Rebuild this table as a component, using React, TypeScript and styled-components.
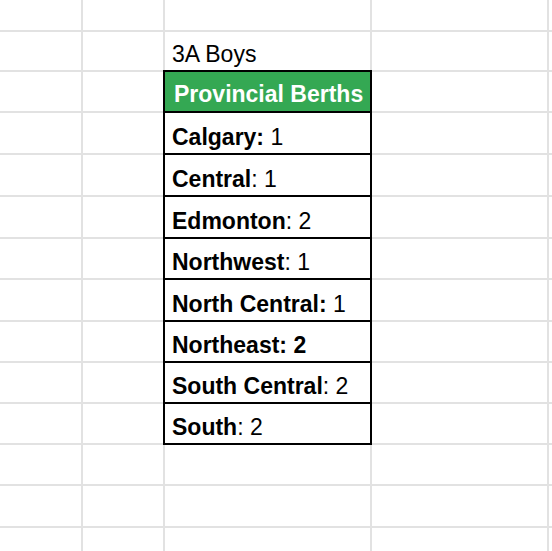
import React from "react";
import styled, { createGlobalStyle } from "styled-components";

const Global = createGlobalStyle`
  html, body { margin: 0; padding: 0; background: #fff; }
  body { font-family: "Liberation Sans", Arial, sans-serif; overflow: hidden; }
`;

const GRID = "#e2e2e2";
const INK = "#000";
const GREEN = "#34a853";

const rowHeights = [32, 40, 41, 42, 42, 42, 41, 42, 41, 41, 41, 41, 42, 40];

const Sheet = styled.div`
  display: grid;
  grid-template-columns: 83px 82px 207px 177px 1fr;
  grid-template-rows: ${rowHeights.map((h) => `${h}px`).join(" ")};
  width: 552px;
  height: 551px;
  overflow: hidden;
`;

const Cell = styled.div<{ $boxed?: boolean; $header?: boolean }>`
  box-sizing: border-box;
  border-right: 2px solid ${(p) => (p.$boxed ? INK : GRID)};
  border-bottom: 2px solid ${(p) => (p.$boxed ? INK : GRID)};
  box-shadow: ${(p) => (p.$boxed ? `-2px 0 0 ${INK}, -2px -2px 0 ${INK}, 0 -2px 0 ${INK}` : "none")};
  background: ${(p) => (p.$header ? GREEN : "transparent")};
  color: ${(p) => (p.$header ? "#fff" : INK)};
  font-weight: ${(p) => (p.$header ? 700 : 400)};
  font-size: 23px;
  line-height: 1;
  display: flex;
  align-items: flex-end;
  padding: 0 0 ${(p) => (p.$header ? 5 : 4)}px ${(p) => (p.$header ? 9 : 7)}px;
  white-space: pre;
  position: relative;
`;

const Bold = styled.b`
  font-weight: 700;
`;

const Plain = styled.span`
  font-weight: 400;
`;

type Entry = { bold: string; rest: string };

const entries: Entry[] = [
  { bold: "Calgary:", rest: " 1" },
  { bold: "Central", rest: ": 1" },
  { bold: "Edmonton", rest: ": 2" },
  { bold: "Northwest", rest: ": 1" },
  { bold: "North Central:", rest: " 1" },
  { bold: "Northeast: 2", rest: "" },
  { bold: "South Central", rest: ": 2" },
  { bold: "South", rest: ": 2" },
];

type RowDef = { kind: "empty" } | { kind: "title" } | { kind: "header" } | { kind: "entry"; e: Entry };

const rows: RowDef[] = [
  { kind: "empty" },
  { kind: "title" },
  { kind: "header" },
  ...entries.map((e) => ({ kind: "entry" as const, e })),
  { kind: "empty" },
  { kind: "empty" },
  { kind: "empty" },
];

export default function App() {
  return (
    <>
      <Global />
      <Sheet>
        {rows.map((r, i) => (
          <React.Fragment key={i}>
            <Cell />
            <Cell />
            {r.kind === "empty" && <Cell />}
            {r.kind === "title" && <Cell>3A Boys</Cell>}
            {r.kind === "header" && (
              <Cell $boxed $header>
                Provincial Berths
              </Cell>
            )}
            {r.kind === "entry" && (
              <Cell $boxed>
                <span>
                  <Bold>{r.e.bold}</Bold>
                  {r.e.rest && <Plain>{r.e.rest}</Plain>}
                </span>
              </Cell>
            )}
            <Cell />
            <Cell />
          </React.Fragment>
        ))}
      </Sheet>
    </>
  );
}
